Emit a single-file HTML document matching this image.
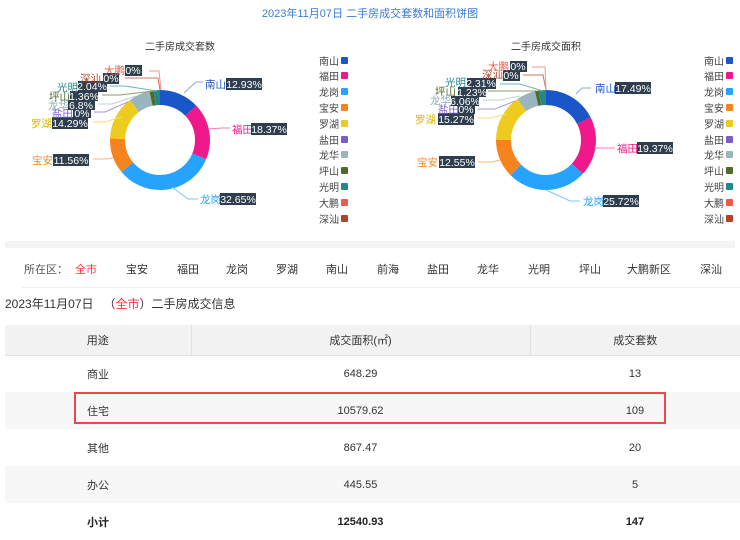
<!DOCTYPE html>
<html><head><meta charset="utf-8">
<style>
*{margin:0;padding:0;box-sizing:border-box}
body{width:740px;height:536px;overflow:hidden;background:#fff;font-family:"Liberation Sans","Noto Sans CJK SC",sans-serif;color:#333;position:relative}
.a{position:absolute;white-space:nowrap}
svg text{font-family:"Liberation Sans","Noto Sans CJK SC",sans-serif}
.f{position:absolute;top:261px;font-size:11px;color:#333}
table{position:absolute;left:5px;top:325px;width:735px;border-collapse:collapse;font-size:11px;color:#333}
td{text-align:center;height:37px;padding:0}
tr.h td{background:#f2f2f2;height:30px;border-right:1px solid #e4e4e4;border-bottom:1px solid #e4e4e4}
tr.h td:last-child{border-right:none}
tr.g td{background:#f7f7f7}
tr.b td{font-weight:bold;color:#222}
</style></head><body>
<div class="a" style="left:0;width:740px;text-align:center;top:5px;font-size:11px;color:#3a7bd5">2023年11月07日 二手房成交套数和面积饼图</div>

<svg class="a" style="left:0;top:0" width="740" height="240" viewBox="0 0 740 240">
<g font-size="10">
<text x="180" y="50" text-anchor="middle" fill="#333">二手房成交套数</text>
<text x="546" y="50" text-anchor="middle" fill="#333">二手房成交面积</text>
</g>
<g transform="translate(160,140) rotate(-90)" fill="none" stroke-width="15">
<circle r="42.5" pathLength="100" stroke="#1a56c8" stroke-dasharray="12.93 100" stroke-dashoffset="0"/>
<circle r="42.5" pathLength="100" stroke="#f0198c" stroke-dasharray="18.37 100" stroke-dashoffset="-12.93"/>
<circle r="42.5" pathLength="100" stroke="#26a3ff" stroke-dasharray="32.65 100" stroke-dashoffset="-31.30"/>
<circle r="42.5" pathLength="100" stroke="#f5841e" stroke-dasharray="11.56 100" stroke-dashoffset="-63.95"/>
<circle r="42.5" pathLength="100" stroke="#edcb1f" stroke-dasharray="14.29 100" stroke-dashoffset="-75.51"/>
<circle r="42.5" pathLength="100" stroke="#9ab4c0" stroke-dasharray="6.8 100" stroke-dashoffset="-89.80"/>
<circle r="42.5" pathLength="100" stroke="#4f6b2a" stroke-dasharray="1.36 100" stroke-dashoffset="-96.60"/>
<circle r="42.5" pathLength="100" stroke="#24888a" stroke-dasharray="2.04 100" stroke-dashoffset="-97.96"/>
</g>
<g transform="translate(546,140) rotate(-90)" fill="none" stroke-width="15">
<circle r="42.5" pathLength="100" stroke="#1a56c8" stroke-dasharray="17.49 100" stroke-dashoffset="0"/>
<circle r="42.5" pathLength="100" stroke="#f0198c" stroke-dasharray="19.37 100" stroke-dashoffset="-17.49"/>
<circle r="42.5" pathLength="100" stroke="#26a3ff" stroke-dasharray="25.72 100" stroke-dashoffset="-36.86"/>
<circle r="42.5" pathLength="100" stroke="#f5841e" stroke-dasharray="12.55 100" stroke-dashoffset="-62.58"/>
<circle r="42.5" pathLength="100" stroke="#edcb1f" stroke-dasharray="15.27 100" stroke-dashoffset="-75.13"/>
<circle r="42.5" pathLength="100" stroke="#9ab4c0" stroke-dasharray="6.06 100" stroke-dashoffset="-90.40"/>
<circle r="42.5" pathLength="100" stroke="#4f6b2a" stroke-dasharray="1.23 100" stroke-dashoffset="-96.46"/>
<circle r="42.5" pathLength="100" stroke="#24888a" stroke-dasharray="2.31 100" stroke-dashoffset="-97.69"/>
</g>
<g fill="none" stroke-width="1">
<polyline points="184,93 196,82 203,82" stroke="#8aa9e0"/>
<polyline points="208,129 222,128 230,128" stroke="#f47bbb"/>
<polyline points="172,187 188,199 198,199" stroke="#7cc4ff"/>
<polyline points="113,158 105,159 93,159" stroke="#f8b47a"/>
<polyline points="122,117 105,122 93,122" stroke="#f3dc72"/>
<polyline points="128,102 105,112 94,112" stroke="#a996e0"/>
<polyline points="136,96 112,104 98,104" stroke="#c0d0d8"/>
<polyline points="154,91 120,95 102,95" stroke="#8a9e6a"/>
<polyline points="157,91 125,86 110,86" stroke="#6fb6b8"/>
<polyline points="160,90 158,78 125,78" stroke="#c9775f"/>
<polyline points="161,90 159,71 149,71" stroke="#f4978d"/>
</g>
<g fill="none" stroke-width="1">
<polyline points="576,94 582,88 591,88" stroke="#8aa9e0"/>
<polyline points="594,148 608,148 615,148" stroke="#f47bbb"/>
<polyline points="546,190 570,201 580,201" stroke="#7cc4ff"/>
<polyline points="500,160 492,162 478,162" stroke="#f8b47a"/>
<polyline points="507,114 490,118 478,118" stroke="#f3dc72"/>
<polyline points="515,101 495,109 478,109" stroke="#a996e0"/>
<polyline points="520,96 500,100 483,100" stroke="#c0d0d8"/>
<polyline points="537,91 510,91 488,91" stroke="#8a9e6a"/>
<polyline points="543,91 520,84 500,84" stroke="#6fb6b8"/>
<polyline points="546,90 543,75 523,75" stroke="#c9775f"/>
<polyline points="546,90 545,67 532,67" stroke="#f4978d"/>
</g>
<g font-size="10.5">
<text x="205" y="88" fill="#1a56c8">南山</text><rect x="226" y="78" width="36" height="12" fill="#2f3e4e"/><text x="244" y="88" fill="#fff" text-anchor="middle">12.93%</text>
<text x="232" y="133" fill="#f0198c">福田</text><rect x="251" y="123" width="36" height="12" fill="#2f3e4e"/><text x="269" y="133" fill="#fff" text-anchor="middle">18.37%</text>
<text x="200" y="203" fill="#26a3ff">龙岗</text><rect x="220" y="193" width="36" height="12" fill="#2f3e4e"/><text x="238" y="203" fill="#fff" text-anchor="middle">32.65%</text>
<text x="32" y="164" fill="#f5841e">宝安</text><rect x="53" y="154" width="36" height="12" fill="#2f3e4e"/><text x="71" y="164" fill="#fff" text-anchor="middle">11.56%</text>
<text x="31" y="127" fill="#d9b500">罗湖</text><rect x="52" y="117" width="36" height="12" fill="#2f3e4e"/><text x="70" y="127" fill="#fff" text-anchor="middle">14.29%</text>
<text x="52" y="117" fill="#7b5ccc">盐田</text><rect x="73" y="108" width="18" height="10" fill="#2f3e4e"/><text x="82" y="117" fill="#fff" text-anchor="middle">0%</text>
<text x="48" y="109" fill="#8fb0bf">龙华</text><rect x="68" y="100" width="27" height="10" fill="#2f3e4e"/><text x="81" y="109" fill="#fff" text-anchor="middle">6.8%</text>
<text x="49" y="100" fill="#4f6b2a">坪山</text><rect x="70" y="91" width="28" height="10" fill="#2f3e4e"/><text x="84" y="100" fill="#fff" text-anchor="middle">1.36%</text>
<text x="57" y="91" fill="#24888a">光明</text><rect x="78" y="81" width="29" height="11" fill="#2f3e4e"/><text x="92" y="90" fill="#fff" text-anchor="middle">2.04%</text>
<text x="80" y="82" fill="#b04428">深汕</text><rect x="103" y="73" width="16" height="11" fill="#2f3e4e"/><text x="111" y="82" fill="#fff" text-anchor="middle">0%</text>
<text x="104" y="74" fill="#f05a4b">大鹏</text><rect x="125" y="65" width="17" height="11" fill="#2f3e4e"/><text x="133" y="74" fill="#fff" text-anchor="middle">0%</text>
</g>
<g font-size="10.5">
<text x="595" y="92" fill="#1a56c8">南山</text><rect x="615" y="82" width="36" height="12" fill="#2f3e4e"/><text x="633" y="92" fill="#fff" text-anchor="middle">17.49%</text>
<text x="617" y="152" fill="#f0198c">福田</text><rect x="637" y="142" width="36" height="12" fill="#2f3e4e"/><text x="655" y="152" fill="#fff" text-anchor="middle">19.37%</text>
<text x="583" y="205" fill="#26a3ff">龙岗</text><rect x="603" y="195" width="36" height="12" fill="#2f3e4e"/><text x="621" y="205" fill="#fff" text-anchor="middle">25.72%</text>
<text x="417" y="166" fill="#f5841e">宝安</text><rect x="439" y="156" width="36" height="12" fill="#2f3e4e"/><text x="457" y="166" fill="#fff" text-anchor="middle">12.55%</text>
<text x="415" y="123" fill="#d9b500">罗湖</text><rect x="438" y="113" width="36" height="12" fill="#2f3e4e"/><text x="456" y="123" fill="#fff" text-anchor="middle">15.27%</text>
<text x="438" y="113" fill="#7b5ccc">盐田</text><rect x="458" y="104" width="17" height="10" fill="#2f3e4e"/><text x="466" y="113" fill="#fff" text-anchor="middle">0%</text>
<text x="430" y="104" fill="#8fb0bf">龙华</text><rect x="451" y="96" width="28" height="10" fill="#2f3e4e"/><text x="465" y="105" fill="#fff" text-anchor="middle">6.06%</text>
<text x="435" y="95" fill="#4f6b2a">坪山</text><rect x="458" y="87" width="28" height="10" fill="#2f3e4e"/><text x="472" y="96" fill="#fff" text-anchor="middle">1.23%</text>
<text x="445" y="86" fill="#24888a">光明</text><rect x="467" y="78" width="29" height="11" fill="#2f3e4e"/><text x="481" y="87" fill="#fff" text-anchor="middle">2.31%</text>
<text x="482" y="78" fill="#b04428">深汕</text><rect x="503" y="70" width="17" height="11" fill="#2f3e4e"/><text x="511" y="79" fill="#fff" text-anchor="middle">0%</text>
<text x="488" y="70" fill="#f05a4b">大鹏</text><rect x="510" y="61" width="17" height="11" fill="#2f3e4e"/><text x="518" y="70" fill="#fff" text-anchor="middle">0%</text>
</g>
<g font-size="10" fill="#444">
<g id="lg">
<text x="319" y="65">南山</text><rect x="341" y="57" width="7" height="7" rx="1" fill="#1a56c8"/>
<text x="319" y="80">福田</text><rect x="341" y="72" width="7" height="7" rx="1" fill="#f0198c"/>
<text x="319" y="96">龙岗</text><rect x="341" y="88" width="7" height="7" rx="1" fill="#26a3ff"/>
<text x="319" y="112">宝安</text><rect x="341" y="104" width="7" height="7" rx="1" fill="#f5841e"/>
<text x="319" y="128">罗湖</text><rect x="341" y="120" width="7" height="7" rx="1" fill="#edcb1f"/>
<text x="319" y="144">盐田</text><rect x="341" y="136" width="7" height="7" rx="1" fill="#7b5ccc"/>
<text x="319" y="159">龙华</text><rect x="341" y="151" width="7" height="7" rx="1" fill="#9ab4c0"/>
<text x="319" y="175">坪山</text><rect x="341" y="167" width="7" height="7" rx="1" fill="#4f6b2a"/>
<text x="319" y="191">光明</text><rect x="341" y="183" width="7" height="7" rx="1" fill="#24888a"/>
<text x="319" y="207">大鹏</text><rect x="341" y="199" width="7" height="7" rx="1" fill="#f05a4b"/>
<text x="319" y="223">深汕</text><rect x="341" y="215" width="7" height="7" rx="1" fill="#b04428"/>
</g>
<use href="#lg" x="385"/>
</g>
</svg>

<div class="a" style="left:5px;top:241px;width:730px;height:7px;background:#f4f4f4"></div>
<div class="f" style="left:24px;color:#555">所在区：</div>
<div class="f" style="left:75px;color:#f33">全市</div>
<div class="f" style="left:126px">宝安</div>
<div class="f" style="left:177px">福田</div>
<div class="f" style="left:226px">龙岗</div>
<div class="f" style="left:276px">罗湖</div>
<div class="f" style="left:326px">南山</div>
<div class="f" style="left:377px">前海</div>
<div class="f" style="left:427px">盐田</div>
<div class="f" style="left:477px">龙华</div>
<div class="f" style="left:528px">光明</div>
<div class="f" style="left:579px">坪山</div>
<div class="f" style="left:627px">大鹏新区</div>
<div class="f" style="left:700px">深汕</div>
<div class="a" style="left:22px;top:287px;width:718px;height:1px;background:#eee"></div>
<div class="a" style="left:5px;top:295px;font-size:12px;color:#333">2023年11月07日 &nbsp;&nbsp;（<span style="color:#f33">全市</span>）二手房成交信息</div>

<table>
<tr class="h"><td style="width:186px">用途</td><td style="width:339px">成交面积(㎡)</td><td>成交套数</td></tr>
<tr><td>商业</td><td>648.29</td><td>13</td></tr>
<tr class="g"><td>住宅</td><td>10579.62</td><td>109</td></tr>
<tr><td>其他</td><td>867.47</td><td>20</td></tr>
<tr class="g"><td>办公</td><td>445.55</td><td>5</td></tr>
<tr class="b"><td>小计</td><td>12540.93</td><td>147</td></tr>
</table>
<div class="a" style="left:74px;top:392px;width:592px;height:32px;border:2px solid #f0474a"></div>
</body></html>
